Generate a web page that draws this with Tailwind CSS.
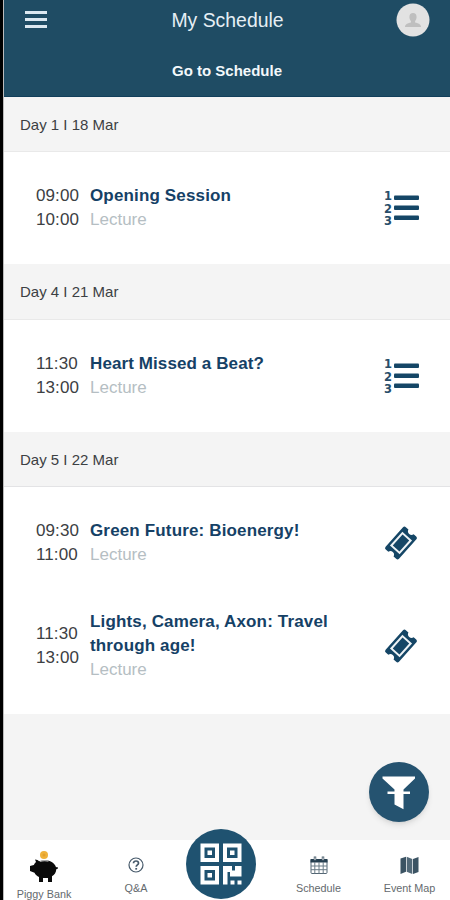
<!doctype html>
<html lang="en">

<head>
    <meta charset="utf-8">
    <meta name="viewport" content="width=device-width, initial-scale=1">
    <title>My Schedule</title>
    <script src="https://cdn.jsdelivr.net/npm/@tailwindcss/browser@4"></script>
</head>

<body class="bg-black font-['Liberation_Sans',Arial,sans-serif]">
    <!-- shared icons -->
    <svg class="hidden" xmlns="http://www.w3.org/2000/svg">
        <symbol id="ticket" viewBox="0 0 36 36">
            <g transform="rotate(-48 18 18)">
                <path fill="#154666"
                    d="M5 9h26a2 2 0 0 1 2 2v3.500a3.600 3.600 0 0 0 0 7v3.500a2 2 0 0 1-2 2H5a2 2 0 0 1-2-2v-3.500a3.600 3.600 0 0 0 0-7V11a2 2 0 0 1 2-2z" />
                <rect x="9.700" y="12.500" width="16.600" height="11" fill="none" stroke="#eef3f6" stroke-width="2" />
            </g>
        </symbol>
        <symbol id="list" viewBox="0 0 36 36">
            <g fill="#284d69" font-family="DejaVu Sans, sans-serif" font-weight="bold" font-size="11.500">
                <text x="0" y="10">1</text>
                <text x="0" y="22.500">2</text>
                <text x="0" y="35">3</text>
            </g>
            <g fill="#154666">
                <rect x="10" y="5.500" width="25" height="4.600" rx="1" />
                <rect x="10" y="15.500" width="25" height="4.600" rx="1" />
                <rect x="10" y="25.500" width="25" height="4.600" rx="1" />
            </g>
        </symbol>
    </svg>

    <div class="flex flex-col h-[900px] ml-[3px] border-l border-[#bbb] bg-[#f4f4f4] overflow-hidden">
        <header class="h-[97px] shrink-0 bg-[#1f4c64] border-b border-[#123f5b] text-white">
            <div class="flex items-center justify-between h-10 pl-[21px] pr-5">
                <button class="flex flex-col gap-1 w-[22px] -mt-0.5">
                    <span class="h-[3px] bg-[#dce8f0]"></span>
                    <span class="h-[3px] bg-[#dce8f0]"></span>
                    <span class="h-[3px] bg-[#dce8f0]"></span>
                </button>
                <h1 class="text-[19.4px] text-[#e6eff5] ml-3 mt-0.5">My Schedule</h1>
                <svg class="size-[34px] -mt-px" viewBox="0 0 34 34">
                    <circle cx="17" cy="17" r="16.5" fill="#e2e2e2" />
                    <path fill="#bfbfbf"
                        d="M17 10c2.300 0 3.600 1.600 3.600 4 0 1.900-.7 3-1.500 3.900v1.600c2.600.6 5.900 1.500 5.900 4.500H9c0-3 3.300-3.900 5.900-4.500v-1.600c-.8-.9-1.500-2-1.500-3.900 0-2.400 1.300-4 3.600-4z" />
                </svg>
            </div>
            <a class="block pt-5 text-center text-[15px] leading-[22px] font-bold text-[#f3f8fb]">Go to Schedule</a>
        </header>

        <main class="grow min-h-0 text-[17px] leading-6 text-[#3c4043]">
            <h2 class="h-[55px] pl-4 text-[15px] leading-[55px] border-b border-[#e9e9e9]">Day 1 I 18 Mar</h2>
            <div class="flex items-center h-28 pl-8 pr-[30px] bg-white">
                <div class="w-[54px] tracking-[0.1px]">09:00<br>10:00</div>
                <div class="grow">
                    <h3 class="font-bold text-[#154166] tracking-[0.15px]">Opening Session</h3>
                    <p class="text-[#b5bec3]">Lecture</p>
                </div>
                <svg class="size-9"><use href="#list" /></svg>
            </div>

            <h2 class="h-14 pl-4 text-[15px] leading-[55px] border-b border-[#e9e9e9]">Day 4 I 21 Mar</h2>
            <div class="flex items-center h-28 pl-8 pr-[30px] bg-white">
                <div class="w-[54px] tracking-[0.1px]">11:30<br>13:00</div>
                <div class="grow">
                    <h3 class="font-bold text-[#154166] tracking-[0.1px]">Heart Missed a Beat?</h3>
                    <p class="text-[#b5bec3]">Lecture</p>
                </div>
                <svg class="size-9"><use href="#list" /></svg>
            </div>

            <h2 class="h-[55px] pl-4 text-[15px] leading-[55px] border-b border-[#e3e3e5]">Day 5 I 22 Mar</h2>
            <div class="flex flex-col gap-[43px] h-[227px] pt-8 pl-8 pr-[31px] bg-white">
                <div class="flex items-center">
                    <div class="w-[54px] tracking-[0.1px]">09:30<br>11:00</div>
                    <div class="grow">
                        <h3 class="font-bold text-[#154166] tracking-[0.15px]">Green Future: Bioenergy!</h3>
                        <p class="text-[#b5bec3]">Lecture</p>
                    </div>
                    <svg class="size-9"><use href="#ticket" /></svg>
                </div>
                <div class="flex items-center">
                    <div class="w-[54px] tracking-[0.1px]">11:30<br>13:00</div>
                    <div class="grow">
                        <h3 class="font-bold text-[#154166] tracking-[0.15px]">Lights, Camera, Axon: Travel<br>through age!</h3>
                        <p class="text-[#b5bec3]">Lecture</p>
                    </div>
                    <svg class="size-9"><use href="#ticket" /></svg>
                </div>
            </div>
        </main>

        <nav class="grid grid-cols-[82px_100px_101px_92px_71px] h-15 shrink-0 bg-white text-center text-[10.8px] leading-3 text-[#646a6e]">
            <a class="flex flex-col items-center pt-2.5 -ml-px mr-px">
                <svg class="w-[30px] h-[34px]" viewBox="0 0 30 34">
                    <circle cx="15" cy="5" r="4" fill="#efb13a" />
                    <circle cx="15" cy="5" r="1.5" fill="#e39f2c" />
                    <path fill="#0a0a0a"
                        d="M6 9.500c2 0 3 .8 4 1.800 6-1.800 15-1.300 17 6l1.500-.3.500 1.500-1.700.8c-.2 3.500-1.800 5.500-4.300 7V32h-4v-4h-5v4h-4v-5c-2-1-3.500-2.300-4.500-4.300L1 21v-5l3.800-1c.6-1.300 1.400-2.200 2.200-3z" />
                    <path d="M11 11.500q4-1.500 8.500-.3" fill="none" stroke="#aaa" stroke-width="1.2" />
                </svg>
                <span class="mt-1">Piggy Bank</span>
            </a>
            <a class="flex flex-col items-center pt-[17px]">
                <svg class="size-4" viewBox="0 0 16 16" fill="none" stroke="#46596a">
                    <circle cx="8" cy="8" r="7" stroke-width="1.2" />
                    <path d="M5.500 6.300c0-1.500 1.100-2.300 2.500-2.300s2.500.9 2.500 2.200c0 1.600-2.300 1.800-2.300 3.500" stroke-width="1.7" />
                    <path d="M7.300 11.800h1.800" stroke-width="1.7" />
                </svg>
                <span class="mt-[9px]">Q&amp;A</span>
            </a>
            <div class="relative">
                <!-- scan button sticks out above the bar -->
                <button class="absolute left-0 -top-[11px] size-[70px] rounded-full bg-[#1f5270] flex items-center justify-center">
                    <svg class="size-[42px]" viewBox="0 0 42 42">
                        <g fill="none" stroke="#fff" stroke-width="4">
                            <path d="M2.500 2.500h14.500v14.500H2.500zM25 2.500h14.500v14.500H25zM2.500 25h14.500v14.500H2.500z" />
                        </g>
                        <path fill="#fff"
                            d="M7.500 7.500h4.500v4.500H7.500zM30 7.500h4.500v4.500H30zM7.500 30h4.500v4.500H7.500zM23 23h9v4.500h3V23h6.500v10.500h-11.500v-4.500h-2.500v12.500H23zM30.500 37.500h4v4h-4zM37.500 37.500h4v4h-4z" />
                    </svg>
                </button>
            </div>
            <a class="flex flex-col items-center pt-4 -ml-[29px]">
                <svg class="w-[18px] h-[19px]" viewBox="0 0 18 19">
                    <rect x="1" y="3.5" width="16" height="14" rx="1" fill="#fff" stroke="#536674" />
                    <path fill="#263f50" d="M.5 3h17v3.500H.5z" />
                    <path d="M4.800 6v11.500M9 6v11.500M13.200 6v11.500M1 10h16M1 13.700h16" stroke="#6b7c87" />
                    <path d="M5 .5v4M13 .5v4" stroke="#536674" stroke-width="2.5" />
                    <path d="M5 1.500v2.500M13 1.500v2.500" stroke="#fff" stroke-width=".8" />
                </svg>
                <span class="mt-[7px]">Schedule</span>
            </a>
            <a class="flex flex-col items-center pt-4 -ml-2.5 mr-0">
                <svg class="w-[19px] h-[19px]" viewBox="0 0 19 19">
                    <path fill="#3b5363" d="M.5 2.500 6 .7v15L.5 18zM13 3l5.500-2v15L13 18z" />
                    <path fill="#526978" d="m6.700.7 5.600 2.300v15l-5.600-2.300z" />
                </svg>
                <span class="mt-[7px] whitespace-nowrap">Event Map</span>
            </a>
        </nav>
    </div>

    <!-- filter button -->
    <button class="absolute left-[369px] top-[762px] size-[60px] rounded-full bg-[#255370] shadow-md">
        <svg class="size-[60px]" viewBox="0 0 60 60" fill="#fff">
            <path d="M13.500 14.500h32.500v2L34.500 27.500v19.800L25.500 42.500v-15L13.500 16.500z" />
            <path d="M18.500 29.500h22.500v2.500H18.500z" />
        </svg>
    </button>
</body>

</html>
